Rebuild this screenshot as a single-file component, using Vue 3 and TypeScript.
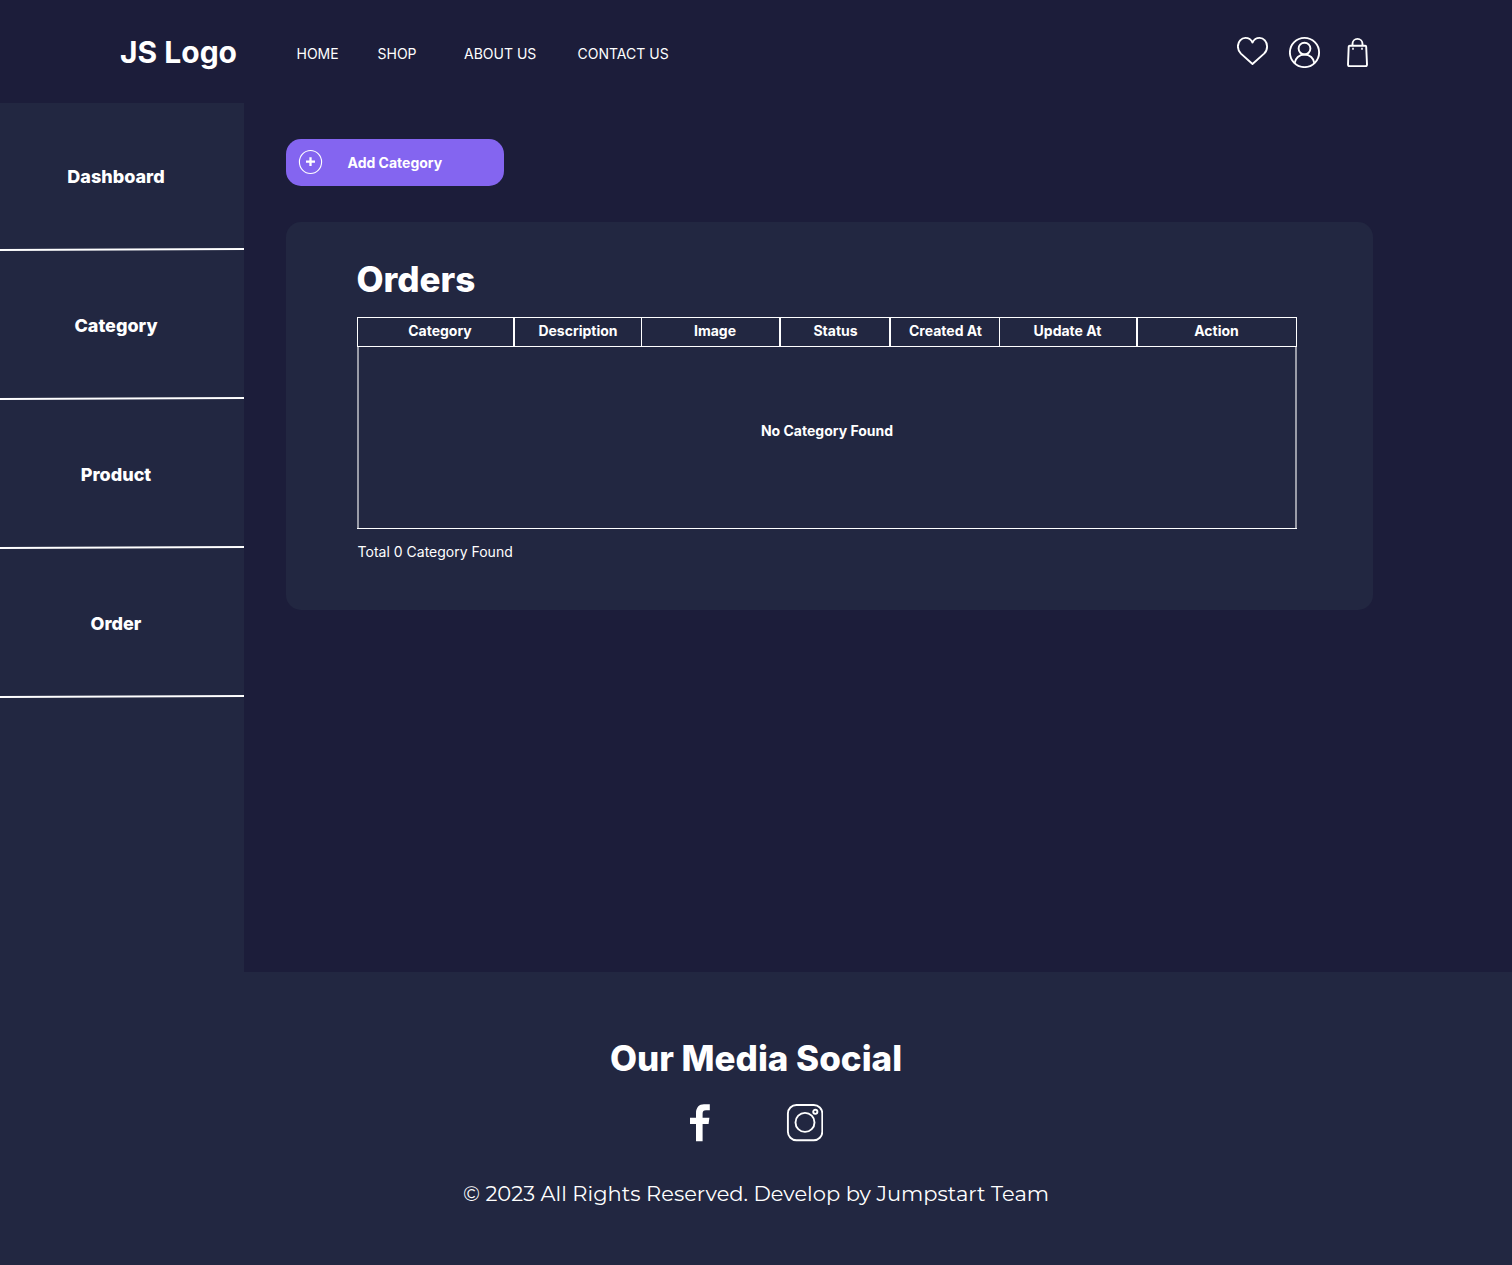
<script setup lang="ts">
interface Column {
  label: string
  width: number
  overlap?: boolean
  shift?: number
}

const links: string[] = ['HOME', 'SHOP', 'ABOUT US', 'CONTACT US']
const sections: string[] = ['Dashboard', 'Category', 'Product', 'Order']
const columns: Column[] = [
  { label: 'Category', width: 157, shift: 9 },
  { label: 'Description', width: 128 },
  { label: 'Image', width: 139, overlap: true, shift: 9 },
  { label: 'Status', width: 110, shift: 1 },
  { label: 'Created At', width: 110, shift: 1 },
  { label: 'Update At', width: 138, overlap: true, shift: -1 },
  { label: 'Action', width: 160, shift: -1 },
]
</script>

<template>
  <div class="page">
    <header class="header">
      <a class="logo">JS Logo</a>
      <nav class="nav">
        <a v-for="link in links" :key="link">{{ link }}</a>
      </nav>
      <div class="actions">
        <svg width="32" height="32" viewBox="0 0 32 32">
          <path d="M15.5 28L3.9 17.6C2.1 15.8 .9 13.3 .9 10.4C.9 5.5 4.4 1.9 8.4 1.9C11.8 1.9 14.3 3.9 15.5 6.5C16.7 3.9 19.2 1.9 22.6 1.9C26.6 1.9 30.1 5.5 30.1 10.4C30.1 13.3 28.9 15.8 27.1 17.6Z" />
        </svg>
        <svg width="32" height="32" viewBox="0 0 32 32">
          <circle cx="15.5" cy="16.5" r="14.6" />
          <circle cx="15.5" cy="12.6" r="5.9" />
          <path d="M5.7 27C6.3 22.2 10.1 18.5 15.5 18.5S24.7 22.2 25.3 27" />
        </svg>
        <svg width="32" height="32" viewBox="0 0 32 32">
          <path d="M8.8 9.7H24.2Q25.2 9.7 25.2 10.7L26 28.5Q26 30.1 24.5 30.1H8.5Q7 30.1 7 28.5L7.7 10.7Q7.8 9.7 8.8 9.7Z" />
          <path d="M11.5 9.5V8A5 5.1 0 0 1 21.5 8V9.5" />
          <path d="M11.2 12.8H12.8M20.2 12.8H21.8" />
        </svg>
      </div>
    </header>

    <div class="body">
      <aside class="sidebar">
        <div v-for="section in sections" :key="section" class="entry">
          <span>{{ section }}</span>
          <svg width="244" height="4" viewBox="0 0 244 4">
            <path d="M0 2L244 1" stroke="#fff" stroke-width="2" />
          </svg>
        </div>
      </aside>

      <main class="main">
        <button class="add">
          <svg width="25" height="26" viewBox="0 0 25 26">
            <ellipse cx="12.5" cy="13" rx="11.1" ry="11.5" stroke-width="1.1" />
            <path d="M12.5 8.3V17.1M8 12.7H17" stroke-width="2.3" />
          </svg>
          <span>Add Category</span>
        </button>

        <section class="card">
          <h1>Orders</h1>
          <div class="table">
            <div class="head">
              <div
                v-for="column in columns"
                :key="column.label"
                class="cell"
                :class="{ overlap: column.overlap }"
                :style="{ width: column.width + 'px', textIndent: (column.shift ?? 0) + 'px' }"
              >
                {{ column.label }}
              </div>
            </div>
            <div class="empty">No Category Found</div>
          </div>
          <p class="total">Total 0 Category Found</p>
        </section>
      </main>
    </div>

    <footer class="footer">
      <h2>Our Media Social</h2>
      <div class="social">
        <svg width="20" height="38" viewBox="0 0 20 38">
          <path fill="#fff" d="M6 37.2V20H0V13.8H6V9C6 3.6 9 .2 14 .2H19.8V6.3H16C13.5 6.3 12.6 7.4 12.6 9.7V13.8H19.4L18.6 20H12.6V37.2Z" />
        </svg>
        <svg width="38" height="38" viewBox="0 0 38 38" fill="none" stroke="#fff">
          <rect x="2.9" y="1" width="34.4" height="35.2" rx="8.5" stroke-width="1.9" />
          <circle cx="20" cy="18.4" r="9.5" stroke-width="1.9" />
          <circle cx="30.3" cy="7.8" r="2.1" stroke-width="1.9" />
        </svg>
      </div>
      <p>© 2023 All Rights Reserved. Develop by Jumpstart Team</p>
    </footer>
  </div>
</template>

<style>
body {
  background: #1c1d3a;
}
</style>

<style scoped>
.page {
  width: 1512px;
  height: 1265px;
  overflow: hidden;
  display: flex;
  flex-direction: column;
  background: #1c1d3a;
  color: #fff;
  font-family: Inter, "Liberation Sans", sans-serif;
}

h1,
h2,
p {
  margin: 0;
}

.header {
  height: 103px;
  flex: none;
  box-sizing: border-box;
  display: flex;
  padding: 36px 139px 0 120px;
}

.logo {
  width: 176.5px;
  font-size: 30px;
  line-height: 33px;
  font-weight: 700;
}

.nav {
  display: grid;
  grid-template-columns: 81px 86.5px 113.5px 120px;
  font-size: 14px;
  line-height: 36px;
  white-space: nowrap;
}

.actions {
  display: flex;
  gap: 20px;
  margin-left: auto;
}

.actions svg,
.add svg {
  fill: none;
  stroke: #fff;
  stroke-width: 1.9;
  stroke-linejoin: round;
}

.add svg {
  stroke-width: 1.1;
}

.body {
  display: flex;
  height: 869px;
  flex: none;
}

.sidebar {
  width: 244px;
  background: #222741;
}

.entry {
  height: 149px;
  display: flex;
  flex-direction: column;
}

.entry span {
  width: 232px;
  height: 145px;
  line-height: 147px;
  text-align: center;
  font-size: 18px;
  font-weight: 800;
}

.main {
  padding: 36px 0 0 42px;
}

.add {
  display: flex;
  align-items: center;
  width: 218px;
  height: 47px;
  padding: 0 0 0 12px;
  border: 0;
  border-radius: 15px;
  background: #8465f0;
  color: #fff;
  font: 700 14px Inter, "Liberation Sans", sans-serif;
}

.add svg {
  margin-top: -1px;
}

.add span {
  margin-left: 24.5px;
  line-height: 20px;
}

.card {
  width: 1087px;
  height: 388px;
  margin-top: 36px;
  box-sizing: border-box;
  padding: 35px 76px 0 71px;
  border-radius: 15px;
  background: #222741;
}

.card h1,
.footer h2 {
  font-size: 35px;
  line-height: 44px;
  font-weight: 800;
}

.card h1 {
  margin-left: -0.5px;
}

.table {
  margin-top: 16px;
  font-size: 14px;
  font-weight: 700;
  text-align: center;
}

.head {
  display: flex;
}

.cell {
  flex: none;
  height: 30px;
  box-sizing: border-box;
  border: 1px solid #fff;
  line-height: 26px;
}

.cell.overlap {
  margin-left: -1px;
}

.empty {
  height: 182px;
  box-sizing: border-box;
  background:
    linear-gradient(#fff, #fff) bottom / 100% 1px no-repeat,
    linear-gradient(#9a9ca8, #9a9ca8) left / 2px 100% no-repeat,
    linear-gradient(#9a9ca8, #9a9ca8) right / 2px 100% no-repeat;
  line-height: 168px;
}

.total {
  margin: 13px 0 0 0.6px;
  font-size: 14px;
  line-height: 20px;
}

.footer {
  height: 293px;
  flex: none;
  box-sizing: border-box;
  padding-top: 64px;
  background: #222741;
  text-align: center;
}

.social {
  display: flex;
  justify-content: center;
  gap: 75px;
  margin-top: 24px;
}

.footer p {
  margin-top: 36px;
  font-family: Montserrat, "Liberation Sans", sans-serif;
  font-size: 21px;
  line-height: 32px;
  font-weight: 400;
}
</style>
